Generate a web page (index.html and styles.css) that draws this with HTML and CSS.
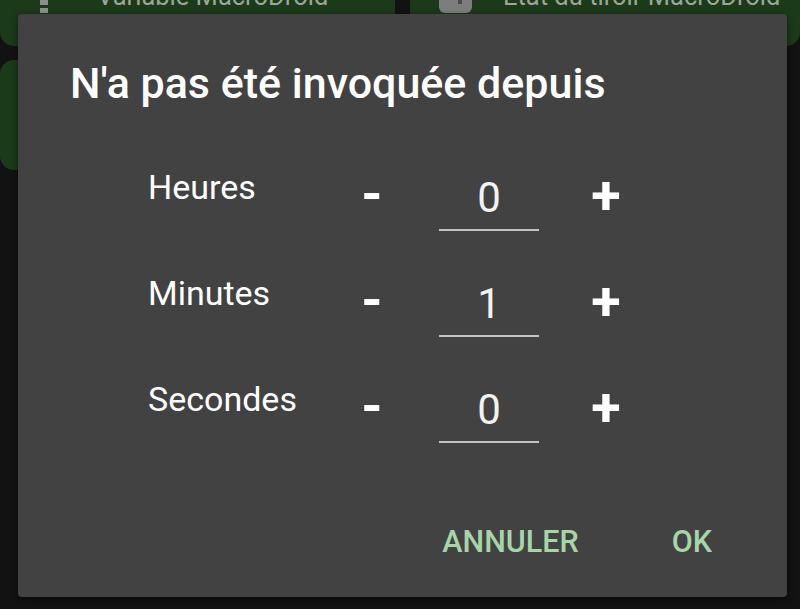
FILE: index.html
```html
<!DOCTYPE html>
<html lang="fr">
<head>
<meta charset="utf-8">
<title>N'a pas été invoquée depuis</title>
<link rel="stylesheet" href="styles.css">
</head>
<body>
<div class="screen">
  <div class="backdrop">
    <div class="card card-top-left">
      <span class="card-icon dots"><i></i><i></i></span>
      <span class="card-text">Variable MacroDroid</span>
    </div>
    <div class="card card-top-right">
      <span class="card-icon square"><i></i></span>
      <span class="card-text">État du tiroir MacroDroid</span>
    </div>
    <div class="card card-second"></div>
  </div>

  <div class="dialog" role="dialog">
    <h1 class="title">N'a pas été invoquée depuis</h1>
    <div class="rows">
      <div class="row">
        <span class="label">Heures</span>
        <span class="step minus">-</span>
        <span class="value">0</span>
        <span class="step plus">+</span>
      </div>
      <div class="row">
        <span class="label">Minutes</span>
        <span class="step minus">-</span>
        <span class="value">1</span>
        <span class="step plus">+</span>
      </div>
      <div class="row">
        <span class="label">Secondes</span>
        <span class="step minus">-</span>
        <span class="value">0</span>
        <span class="step plus">+</span>
      </div>
    </div>
    <div class="actions">
      <span class="btn">ANNULER</span>
      <span class="btn">OK</span>
    </div>
  </div>
</div>
</body>
</html>
```

FILE: styles.css
```css
* { box-sizing: border-box; }
html, body {
  margin: 0;
  padding: 0;
  background: #121212;
  font-family: Roboto, "Liberation Sans", sans-serif;
}
.screen {
  position: relative;
  width: 800px;
  height: 609px;
  overflow: hidden;
  background: #121212;
}
.backdrop {
  display: grid;
  grid-template-columns: 395px 390px;
  grid-template-rows: 46px 110px;
  column-gap: 15px;
  row-gap: 14px;
}
.card {
  background: #1b3a19;
  position: relative;
  overflow: hidden;
  display: flex;
  align-items: flex-start;
}
.card-top-left { border-radius: 0 0 14px 14px; }
.card-top-right { border-radius: 0 0 14px 14px; }
.card-second { border-radius: 14px; }
.card-text {
  color: #9ea59b;
  font-size: 25.5px;
  line-height: 30px;
  margin-top: -19px;
  white-space: nowrap;
}
.card-top-left .card-text { margin-left: 49px; }
.card-top-right .card-text { margin-left: 31px; }
.card-icon { flex: none; }
.dots {
  display: flex;
  flex-direction: column;
  gap: 3px;
  margin-left: 40px;
  width: 8px;
}
.dots i { display: block; width: 8px; height: 5px; background: #8a9087; }
.square {
  width: 33px;
  height: 13px;
  margin-left: 29px;
  background: #7d7d7d;
  border-radius: 0 0 6px 6px;
  position: relative;
}
.square i {
  position: absolute;
  left: 19px;
  top: 0;
  width: 4px;
  height: 4px;
  background: #4a4a4a;
}

.dialog {
  position: absolute;
  left: 18px;
  top: 14px;
  width: 769px;
  height: 583px;
  background: #424242;
  border-radius: 4px;
  box-shadow: 0 2px 6px rgba(0,0,0,0.5);
  padding-top: 44px;
  display: flex;
  flex-direction: column;
}
.title {
  margin: 0 0 0 52px;
  font-size: 43px;
  font-weight: 500;
  line-height: 50px;
  color: #ffffff;
  white-space: nowrap;
}
.rows {
  margin-top: 52px;
  padding-left: 130px;
  display: flex;
  flex-direction: column;
}
.row {
  display: flex;
  align-items: flex-start;
  height: 106px;
}
.label {
  width: 205px;
  margin-top: 7px;
  font-size: 34px;
  line-height: 40px;
  color: #ffffff;
}
.step {
  width: 38px;
  text-align: center;
  color: #ffffff;
  font-weight: 700;
  font-size: 54px;
  line-height: 60px;
}
.minus { margin-top: 4px; }
.plus { margin-top: 6px; }
.value {
  width: 100px;
  margin: 14px 48px 0;
  padding-bottom: 7px;
  border-bottom: 2px solid #c4c4c4;
  text-align: center;
  font-size: 42px;
  line-height: 48px;
  color: #f2f2f2;
}
.actions {
  margin-top: 46px;
  padding-right: 75px;
  display: flex;
  justify-content: flex-end;
  gap: 93px;
}
.btn {
  font-size: 30.5px;
  font-weight: 500;
  line-height: 36px;
  color: #a5d6a7;
}
```
